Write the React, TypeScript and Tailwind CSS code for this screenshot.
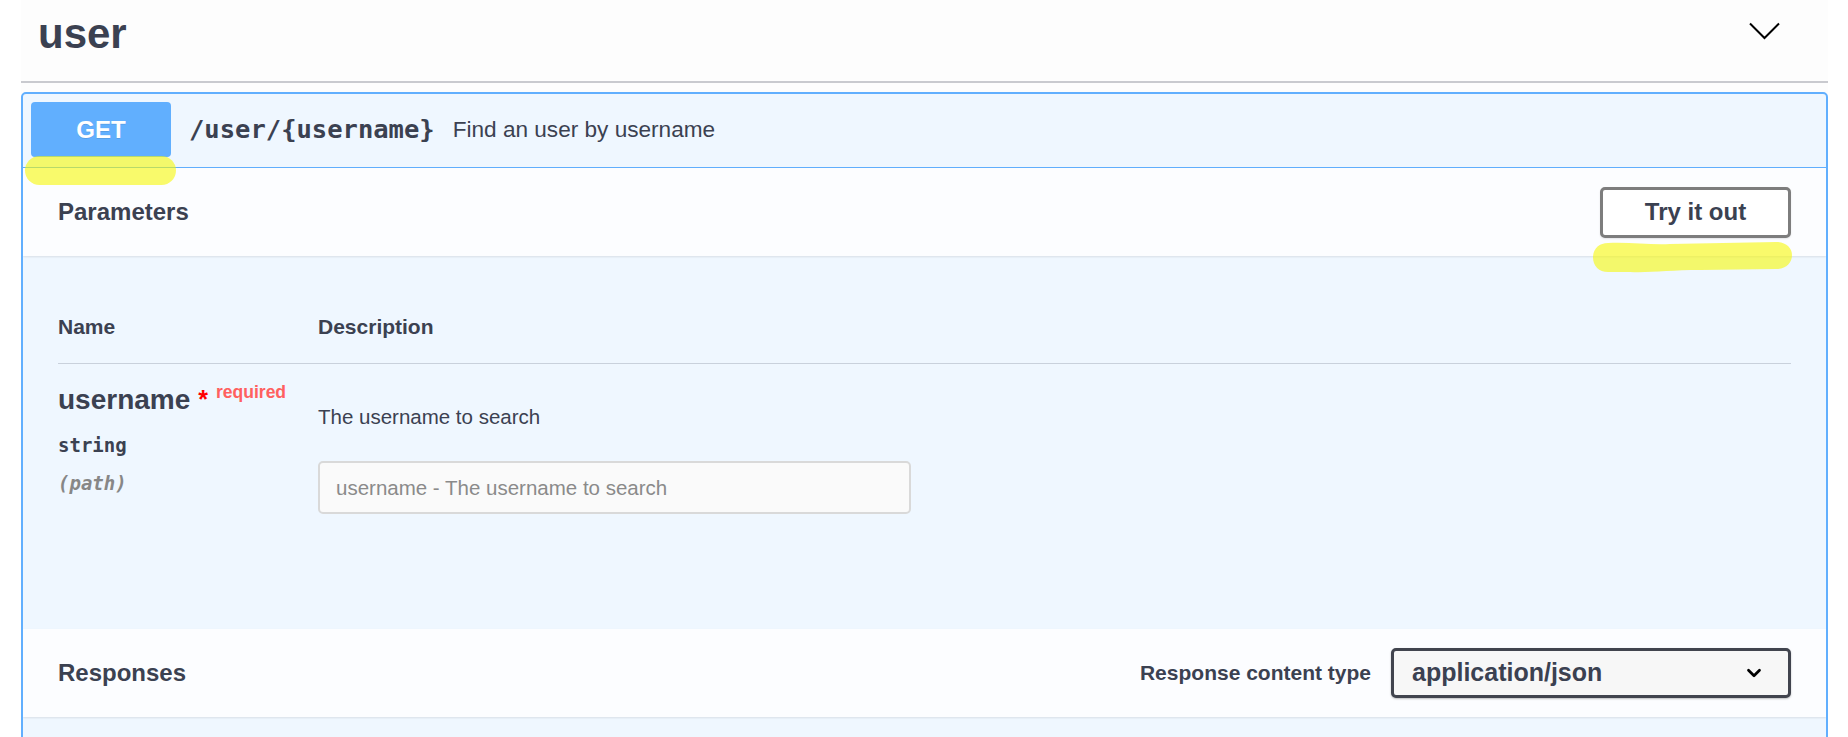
import { ChevronDown } from "lucide-react";

const sans = "font-['Liberation_Sans',Arial,sans-serif]";
const mono = "font-['DejaVu_Sans_Mono','Liberation_Mono',monospace]";

const App = () => {
  return (
    <div className={`relative w-[1848px] h-[737px] overflow-hidden bg-white text-[#3b4151] ${sans}`}>
      <div className="ml-[21px] w-[1807px] bg-[#fdfdfd]">
        {/* Tag header */}
        <div className="h-[83px] flex items-start justify-between pl-[17px] pr-[48px] border-b-2 border-[#c9cacf]">
          <h3 className="pt-[10px] text-[42px] leading-[48px] font-bold">user</h3>
          <svg className="mt-[22px]" width="31" height="18" viewBox="0 0 31 18" fill="none">
            <polyline points="1,1.5 15.5,16 30,1.5" stroke="#000" strokeWidth="2" />
          </svg>
        </div>

        {/* Operation block */}
        <div className="mt-[9px] border-2 border-[#61affe] rounded-[5px] bg-[#eff7ff] overflow-hidden">
          {/* Summary */}
          <div className="h-[74px] flex items-center pl-[8px] pb-[2px] border-b border-[#61affe]">
            <div className="w-[140px] h-[55px] rounded-[4px] bg-[#61affe] text-white text-[24px] font-bold flex items-center justify-center [text-shadow:0_1px_0_rgba(0,0,0,0.1)]">
              GET
            </div>
            <span className={`ml-[18px] text-[25.5px] font-bold ${mono}`}>/user/{"{username}"}</span>
            <span className="ml-[18px] text-[22.6px]">Find an user by username</span>
          </div>

          {/* Parameters header */}
          <div className="h-[88px] bg-[#fcfdff] shadow-[0_1px_2px_rgba(0,0,0,0.1)] flex items-center justify-between px-[35px]">
            <h4 className="text-[24px] font-bold">Parameters</h4>
            <button className="w-[191px] h-[51px] border-[3px] border-[#7d7d7d] rounded-[5px] bg-white text-[24px] font-bold shadow-[0_1px_2px_rgba(0,0,0,0.1)]">
              Try it out
            </button>
          </div>

          {/* Parameters table */}
          <div className="px-[35px] pt-[59px]">
            <div className="grid grid-cols-[260px_1fr] text-[21px] font-bold leading-[24px] pb-[24px] border-b border-[#c9d1dc]">
              <div>Name</div>
              <div>Description</div>
            </div>
            <div className="grid grid-cols-[260px_1fr]">
              <div className="pt-[20px]">
                <div className="flex items-start">
                  <span className="text-[28px] leading-[32px] font-bold">username</span>
                  <span className="ml-[8px] mt-[3px] text-[25px] leading-[24px] text-[#f00] font-bold">*</span>
                  <span className="ml-[8px] -mt-[2px] text-[17.5px] leading-[20px] text-[#ff6060] font-bold">required</span>
                </div>
                <div className={`mt-[17px] text-[19px] leading-[24px] font-bold ${mono}`}>string</div>
                <div className={`mt-[14px] text-[19px] leading-[24px] font-bold italic text-[#878787] ${mono}`}>(path)</div>
              </div>
              <div className="pt-[41px] pb-[115px]">
                <div className="text-[20.5px] leading-[24px]">The username to search</div>
                <input
                  readOnly
                  placeholder="username - The username to search"
                  className="mt-[32px] block w-[593px] h-[53px] px-[16px] border-2 border-[#d9d9d9] rounded-[5px] bg-[#fafafa] text-[20.5px] outline-none placeholder:text-[#8a8a8a]"
                />
              </div>
            </div>
          </div>

          {/* Responses header */}
          <div className="h-[88px] bg-[#fcfdff] shadow-[0_1px_2px_rgba(0,0,0,0.1)] flex items-center justify-between px-[35px]">
            <h4 className="text-[24px] font-bold">Responses</h4>
            <div className="flex items-center gap-[20px]">
              <span className="text-[21px] font-bold">Response content type</span>
              <div className="w-[400px] h-[50px] border-[3px] border-[#41444e] rounded-[5px] bg-[#f7f7f7] shadow-[0_1px_2px_rgba(0,0,0,0.25)] flex items-center justify-between pl-[18px] pr-[23px]">
                <span className="text-[25px] font-bold">application/json</span>
                <ChevronDown className="w-[22px] h-[22px] text-black" strokeWidth={3} />
              </div>
            </div>
          </div>
          <div className="h-[40px]" />
        </div>
      </div>

      {/* Highlighter marks */}
      <svg className="absolute left-[24px] top-[155px]" width="153" height="31" viewBox="0 0 153 31">
        <rect x="1" y="1" width="151" height="29" rx="14.5" fill="#f6f800" fillOpacity="0.58" />
      </svg>
      <svg className="absolute left-[1590px] top-[240px]" width="206" height="36" viewBox="0 0 206 36">
        <path
          d="M 18 3 C 40 2 60 5 80 4 L 186 2 C 196 2 202 8 202 15 C 202 23 196 29 186 29 L 110 30 C 80 30 60 33 40 32 L 18 32 C 9 32 3 26 3 17.5 C 3 9 9 3 18 3 Z"
          fill="#f6f800"
          fillOpacity="0.58"
        />
      </svg>
    </div>
  );
};

export default App;
